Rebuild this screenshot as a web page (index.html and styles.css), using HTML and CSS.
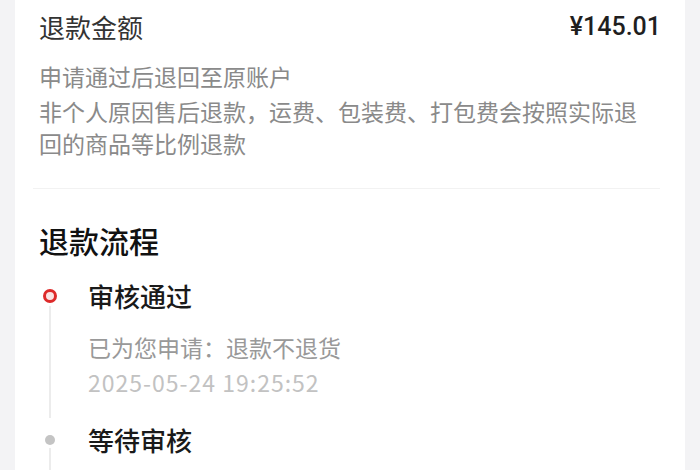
FILE: index.html
```html
<!DOCTYPE html>
<html lang="zh-CN">
<head>
<meta charset="utf-8">
<link rel="stylesheet" href="styles.css">
</head>
<body>
<div class="page">
  <div class="card">
    <div class="amount-row">
      <span class="amount-label">退款金额</span>
      <span class="amount-value">¥145.01</span>
    </div>
    <p class="note note-first">申请通过后退回至原账户</p>
    <p class="note">非个人原因售后退款，运费、包装费、打包费会按照实际退回的商品等比例退款</p>
    <div class="divider"></div>
    <h2 class="section-title">退款流程</h2>
    <div class="timeline">
      <div class="step">
        <div class="rail">
          <span class="dot dot-active"></span>
          <span class="line"></span>
        </div>
        <div class="step-body">
          <div class="step-title">审核通过</div>
          <div class="step-desc">已为您申请：退款不退货</div>
          <div class="step-time">2025-05-24 19:25:52</div>
        </div>
      </div>
      <div class="step">
        <div class="rail">
          <span class="dot dot-pending"></span>
          <span class="line"></span>
        </div>
        <div class="step-body">
          <div class="step-title">等待审核</div>
        </div>
      </div>
    </div>
  </div>
</div>
</body>
</html>
```

FILE: styles.css
```css
html, body {
  margin: 0;
  padding: 0;
  background: #f3f3f5;
  font-family: "Noto Sans CJK SC", "Noto Sans", sans-serif;
}

.page {
  padding-left: 15px;
  width: 670px;
}

.card {
  background: #ffffff;
  padding: 9px 25px 0 24px;
  height: 461px;
  overflow: hidden;
}

.amount-row {
  display: flex;
  justify-content: space-between;
  align-items: center;
  height: 36px;
}

.amount-label {
  font-size: 26px;
  line-height: 36px;
  color: #333333;
}

.amount-value {
  font-family: "Roboto", "Liberation Sans", sans-serif;
  font-size: 25px;
  font-weight: 500;
  color: #1f1f1f;
  line-height: 36px;
  margin-right: -1px;
}

.note {
  margin: 3px 0 0;
  font-size: 23px;
  line-height: 32px;
  color: #8a8a8a;
  width: 612px;
}

.note-first {
  margin-top: 15px;
}

.divider {
  height: 1px;
  background: #f2f2f2;
  margin: 29px 0 0 -6px;
}

.section-title {
  margin: 31px 0 0;
  font-size: 30px;
  font-weight: 500;
  line-height: 40px;
  color: #111111;
}

.timeline {
  margin-top: 18px;
}

.step {
  display: grid;
  grid-template-columns: 22px 1fr;
  column-gap: 27px;
}

.rail {
  display: flex;
  flex-direction: column;
  align-items: center;
}

.dot {
  display: block;
  border-radius: 50%;
  box-sizing: border-box;
}

.dot-active {
  width: 14px;
  height: 14px;
  margin-top: 11px;
  border: 3px solid #dd2a2a;
  background: #fbe3e3;
}

.dot-pending {
  width: 10px;
  height: 10px;
  margin-top: 13px;
  background: #c4c4c4;
}

.line {
  display: block;
  flex: 1;
  width: 2px;
  background: #ececec;
  margin-top: 3px;
  margin-bottom: 4px;
}

.step-body {
  padding-bottom: 23px;
}

.step-title {
  font-size: 26px;
  font-weight: 500;
  line-height: 36px;
  color: #1a1a1a;
}

.step-desc {
  margin-top: 16px;
  font-size: 23px;
  line-height: 34px;
  color: #999999;
}

.step-time {
  margin-top: 1px;
  font-size: 23px;
  line-height: 34px;
  color: #c2c2c2;
  letter-spacing: 1px;
}
```
